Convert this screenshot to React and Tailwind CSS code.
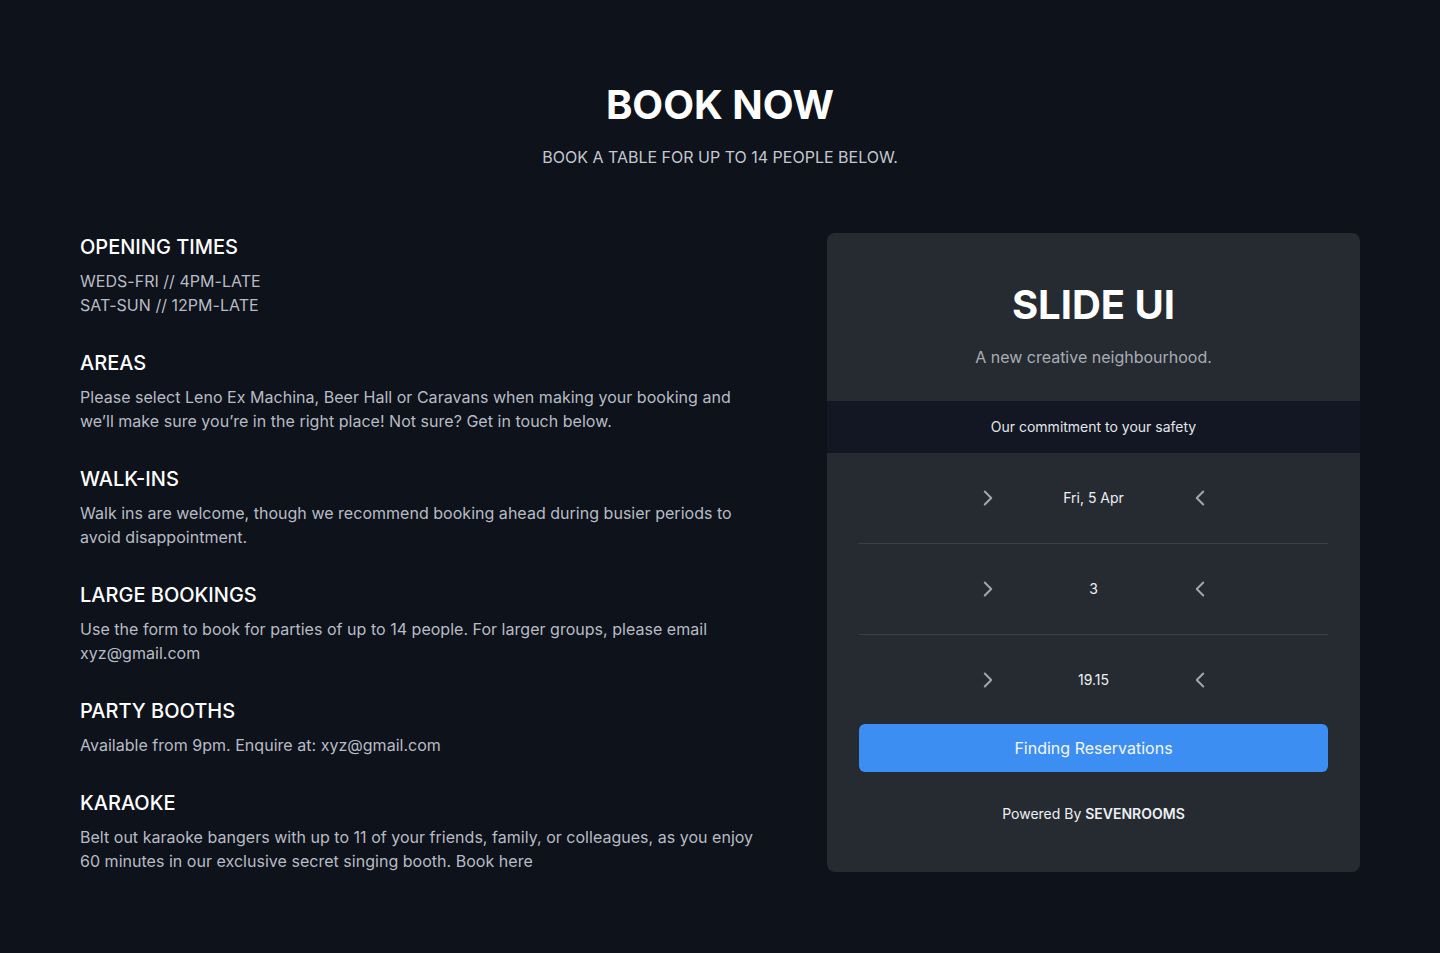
import React from 'react';
import { ChevronRight, ChevronLeft } from 'lucide-react';

const sections = [
    { title: 'OPENING TIMES', lines: ['WEDS-FRI // 4PM-LATE', 'SAT-SUN // 12PM-LATE'] },
    {
        title: 'AREAS',
        lines: [
            "Please select Leno Ex Machina, Beer Hall or Caravans when making your booking and we’ll make sure you’re in the right place! Not sure? Get in touch below.",
        ],
    },
    {
        title: 'WALK-INS',
        lines: ['Walk ins are welcome, though we recommend booking ahead during busier periods to avoid disappointment.'],
    },
    {
        title: 'LARGE BOOKINGS',
        lines: ['Use the form to book for parties of up to 14 people. For larger groups, please email xyz@gmail.com'],
    },
    { title: 'PARTY BOOTHS', lines: ['Available from 9pm. Enquire at: xyz@gmail.com'] },
    {
        title: 'KARAOKE',
        lines: [
            'Belt out karaoke bangers with up to 11 of your friends, family, or colleagues, as you enjoy 60 minutes in our exclusive secret singing booth. Book here',
        ],
    },
];

const pickers = ['Fri, 5 Apr', '3', '19.15'];

function Picker({ value }) {
    return (
        <div className="h-[90px] flex items-center justify-center">
            <ChevronRight className="w-[26px] h-[26px] text-[#a3a7ad]" strokeWidth={1.8} />
            <div className="w-[186px] text-center text-sm text-[#eef0f3]">{value}</div>
            <ChevronLeft className="w-[26px] h-[26px] text-[#a3a7ad]" strokeWidth={1.8} />
        </div>
    );
}

export default function App() {
    return (
        <div className="min-h-[953px] bg-[#0e121b] font-['Inter',sans-serif] px-20 pt-[81px] pb-20">
            {/* Header */}
            <div className="text-center">
                <h1 className="text-[40px] leading-[48px] font-bold text-white">BOOK NOW</h1>
                <p className="mt-4 text-base leading-6 text-[#c4c8cf]">BOOK A TABLE FOR UP TO 14 PEOPLE BELOW.</p>
            </div>

            <div className="mt-[63px] flex justify-between">
                {/* Info column */}
                <div className="w-[684px] pt-px flex flex-col gap-8">
                    {sections.map((s) => (
                        <div key={s.title}>
                            <h2 className="text-xl leading-7 font-medium text-white">{s.title}</h2>
                            <div className="mt-2 text-base leading-6 text-[#b8bcc4] tracking-[0.025px]">
                                {s.lines.map((l) => (
                                    <p key={l}>{l}</p>
                                ))}
                            </div>
                        </div>
                    ))}
                </div>

                {/* Booking widget */}
                <div className="mt-px w-[533px] h-[639px] bg-[#262b32] rounded-lg overflow-hidden">
                    <div className="pt-12 pb-8 text-center">
                        <h2 className="text-[40px] leading-[48px] font-bold text-white">SLIDE UI</h2>
                        <p className="mt-4 text-base leading-6 text-[#a9adb4]">A new creative neighbourhood.</p>
                    </div>
                    <div className="h-[52px] bg-[#121723] flex items-center justify-center text-sm text-[#e3e6ea]">
                        Our commitment to your safety
                    </div>
                    <div className="px-8">
                        <Picker value={pickers[0]} />
                        <div className="h-px bg-[#3b4048]" />
                        <Picker value={pickers[1]} />
                        <div className="h-px bg-[#3b4048]" />
                        <Picker value={pickers[2]} />
                        <button className="-mt-px w-full h-12 rounded-md bg-[#3d8ef3] text-[#f4f8fe] text-base">
                            Finding Reservations
                        </button>
                        <p className="mt-8 text-center text-sm leading-5 text-[#eef0f3]">
                            Powered By <span className="font-semibold">SEVENROOMS</span>
                        </p>
                    </div>
                </div>
            </div>
        </div>
    );
}
